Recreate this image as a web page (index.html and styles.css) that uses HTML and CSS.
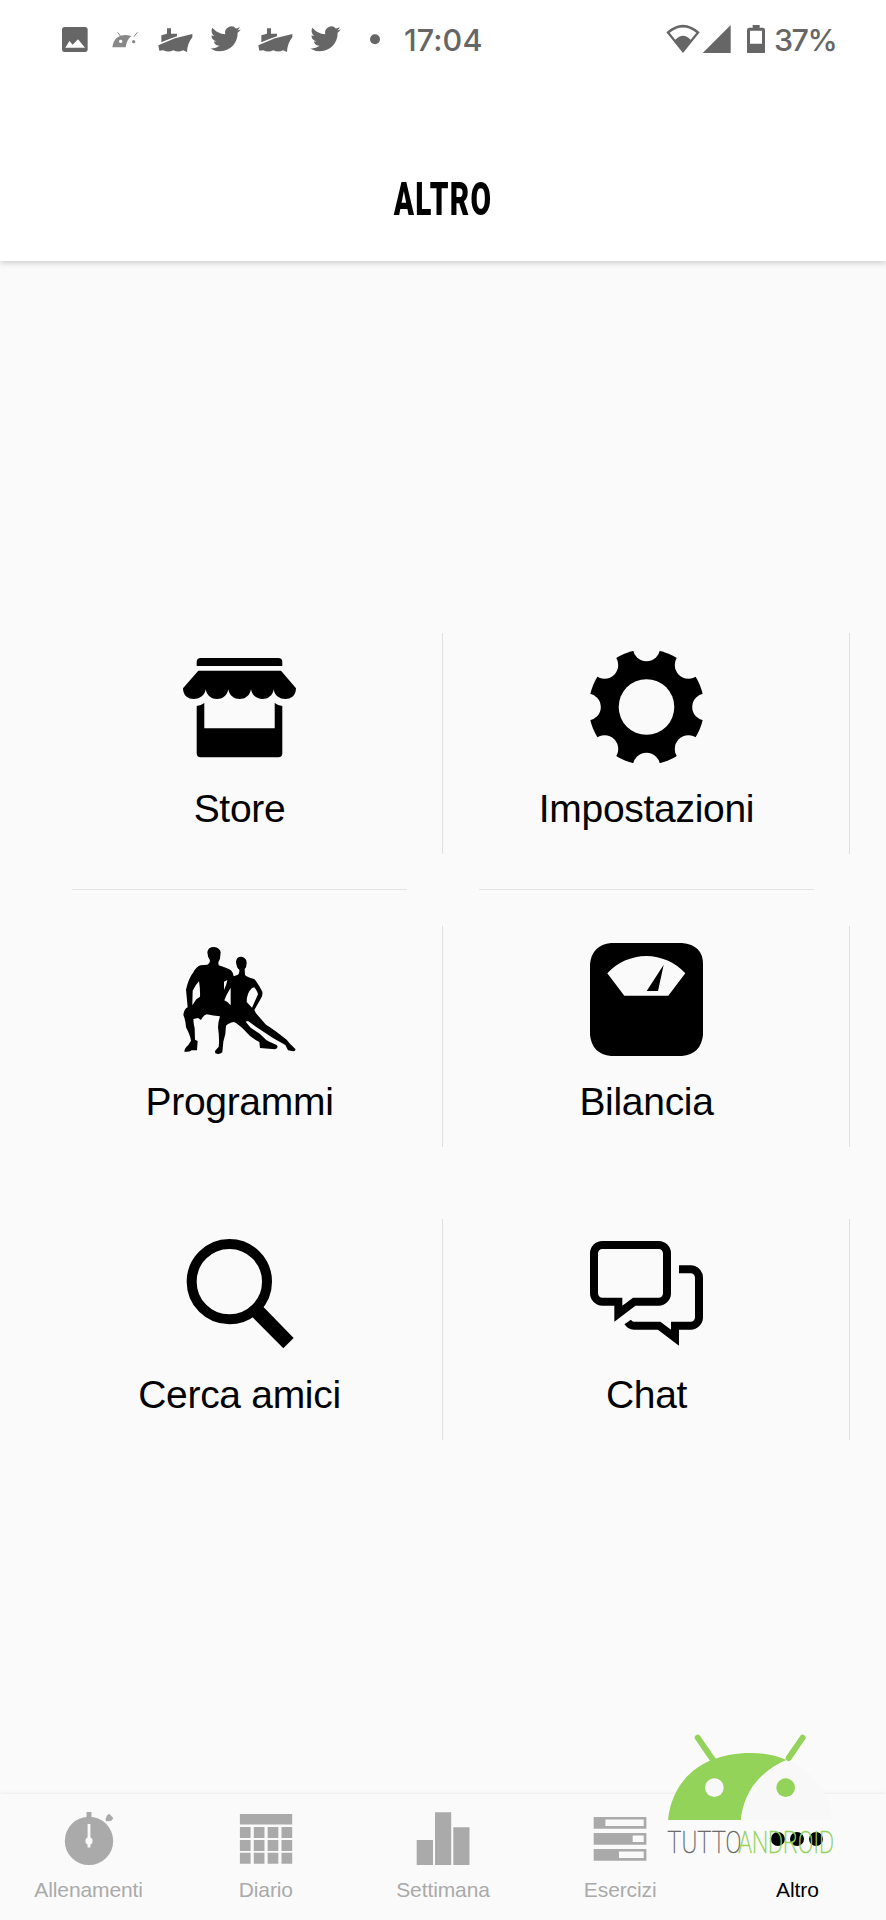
FILE: index.html
```html
<!DOCTYPE html>
<html lang="it">
<head>
    <meta charset="UTF-8">
    <meta name="viewport" content="width=device-width, initial-scale=1.0">
    <title>Altro</title>
    <link rel="stylesheet" href="styles.css">
</head>
<body>

<svg class="defs" width="0" height="0">
    <symbol id="ship" viewBox="0 0 150 90">
        <path d="M34 52V31l14-4V26H51V10h12v16h18v8L60 41zM25 61L75 40 127 27V37Q112 55 111 81L99 76Q85 83 70 76 55 83 40 76L28 77z"/>
    </symbol>
    <symbol id="bird" viewBox="0 0 150 90">
        <path transform="translate(31 -4) scale(3.8)" d="M23.953 4.57a10 10 0 01-2.825.775 4.958 4.958 0 002.163-2.723c-.951.555-2.005.959-3.127 1.184a4.92 4.92 0 00-8.384 4.482C7.69 8.095 4.067 6.13 1.64 3.162a4.822 4.822 0 00-.666 2.475c0 1.71.87 3.213 2.188 4.096a4.904 4.904 0 01-2.228-.616v.06a4.923 4.923 0 003.946 4.827 4.996 4.996 0 01-2.212.085 4.936 4.936 0 004.604 3.417 9.867 9.867 0 01-6.102 2.105c-.39 0-.779-.023-1.17-.067a13.995 13.995 0 007.557 2.209c9.053 0 13.998-7.496 13.998-13.985 0-.21 0-.42-.015-.63A9.935 9.935 0 0024 4.59z"/>
    </symbol>
</svg>

<div class="screen">
    <header class="header">
        <div class="status-bar">
            <div class="notifications">
                <svg viewBox="0 0 150 90"><path fill-rule="evenodd" d="M44 6H105Q113 6 113 14V73Q113 81 105 81H44Q36 81 36 73V14Q36 6 44 6zM46 68H105L84 43 68 59 58 48z"/></svg>
                <svg class="dim" viewBox="0 0 150 90">
                    <path fill-rule="evenodd" d="M37 67Q42 30 78 30L95 33Q80 42 77 67zM62 44a5 5 0 1 0 .1 0z"/>
                    <circle cx="101" cy="50" r="5"/>
                    <path d="M53 22L61 33M112 22L102 35" stroke="currentColor" stroke-width="3"/>
                </svg>
                <svg><use href="#ship"/></svg>
                <svg><use href="#bird"/></svg>
                <svg><use href="#ship"/></svg>
                <svg><use href="#bird"/></svg>
                <svg viewBox="0 0 150 90"><circle cx="75" cy="43" r="15"/></svg>
            </div>
            <span class="time">17:04</span>
            <svg class="signals" viewBox="978 39 300 90">
                <path fill-rule="evenodd" d="M979 67Q1029 22 1079 67L1029 129zM989 68L1006 89Q1029 66 1052 89L1069 68Q1029 37 989 68z"/>
                <path d="M1088 129L1172 45V129z"/>
                <path fill-rule="evenodd" d="M1238 45H1259V53H1268Q1275 53 1275 60V125Q1275 132 1268 132H1228Q1221 132 1221 125V60Q1221 53 1228 53H1238zM1230 62V101H1266V62z"/>
            </svg>
            <span class="battery">37%</span>
        </div>
        <h1>ALTRO</h1>
    </header>

    <main class="menu">
        <a class="item" href="#">
            <svg viewBox="0 0 113 113">
                <path d="M13.7 16V12Q13.7 8 17.7 8H95.3Q99.3 8 99.3 12V16z"/>
                <path d="M15.3 20.7H98L113 38.3C113 53 92 52 90.7 39.3 89 52.3 70 52.3 68 39.3 66 52.3 47.3 52.3 45.3 39.3 43.3 52.3 24.7 52.3 22.7 39.3 21 52 0 53 0 38.3z"/>
                <path d="M13.7 56Q18 55.5 21.3 53V78.3H91.7V53Q95 55.5 99.3 56V103.3Q99.3 107.3 95.3 107.3H17.7Q13.7 107.3 13.7 103.3z"/>
            </svg>
            <span>Store</span>
        </a>
        <a class="item" href="#">
            <svg viewBox="0 0 113 113">
                <mask id="teeth">
                    <rect width="113" height="114" fill="#fff"/>
                    <g fill="#000">
                        <circle cx="56.5" cy="57" r="27.8"/>
                        <circle cx="56.5" cy="-2.3" r="13.6"/>
                        <circle cx="98.4" cy="15.1" r="13.6"/>
                        <circle cx="115.8" cy="57" r="13.6"/>
                        <circle cx="98.4" cy="98.9" r="13.6"/>
                        <circle cx="56.5" cy="116.3" r="13.6"/>
                        <circle cx="14.6" cy="98.9" r="13.6"/>
                        <circle cx="-2.8" cy="57" r="13.6"/>
                        <circle cx="14.6" cy="15.1" r="13.6"/>
                    </g>
                </mask>
                <circle cx="56.5" cy="57" r="57.7" mask="url(#teeth)"/>
            </svg>
            <span>Impostazioni</span>
        </a>
        <a class="item" href="#">
            <svg viewBox="159 72 339 339">
                <path fill-rule="evenodd" d="M232 100Q234 84 252 84 270 86 272 100L270 119 265 130 266 139Q290 146 303 154 309 160 311 172L324 167Q329 162 328 152 319 145 318 128 320 112 334 113 350 115 350 132 350 145 344 150L345 168Q350 174 372 180 380 186 397 218 399 228 393 238L373 273 378 283 408 317Q430 330 470 362L480 374 496 390Q498 397 490 397L474 394 466 378 430 358 380 325 354 306 347 308 362 326 390 345 408 362 415 367 440 378Q447 387 435 391L390 387 388 369Q360 355 345 335 325 315 312 309 295 312 288 320 288 345 280 368L277 400Q268 408 256 403L255 396 266 383Q269 360 264 325 264 310 270 292 250 291 230 286 220 289 213 303L204 297 190 300Q191 318 194 328L195 362 203 366 201 394 185 394Q178 400 163 398 163 388 175 378L183 365Q181 350 168 325 166 300 160 288 162 270 173 265L168 212Q175 180 190 160 200 142 212 139L232 137Q242 132 239 122 233 115 232 100zM207 187Q196 198 188 215L187 259 199 241 210 233Q211 210 207 187zM282 188L292 183 289 196 282 213zM302 206L302 259Q295 249 283 244L290 227zM366 207Q350 222 350 249L366 266 384 226Q383 218 373 205z"/>
            </svg>
            <span>Programmi</span>
        </a>
        <a class="item" href="#">
            <svg viewBox="0 0 113 113">
                <path fill-rule="evenodd" d="M21 0H92Q113 2 113 21V92Q111 111 92 113H21Q2 111 0 92V21Q2 2 21 0zM17.3 30.3L34.3 52.7H78.3L95.3 30.3A52.6 52.6 0 0 0 17.3 30.3zM73.7 21.7L68 48H56.7z"/>
            </svg>
            <span>Bilancia</span>
        </a>
        <a class="item" href="#">
            <svg viewBox="159 80 339 339">
                <circle cx="298" cy="217" r="113" fill="none" stroke="currentColor" stroke-width="30"/>
                <path d="M391 283L491 386 460 417 359 315z"/>
            </svg>
            <span>Cerca amici</span>
        </a>
        <a class="item" href="#">
            <svg viewBox="210 80 339 339">
                <g fill="none" stroke="currentColor" stroke-width="24">
                    <path d="M295 277V313L343 277H416a25 25 0 0 0 25-25V132a25 25 0 0 0-25-25H247a25 25 0 0 0-25 25V252a25 25 0 0 0 25 25z"/>
                    <path d="M477 180H512a25 25 0 0 1 25 25V324a25 25 0 0 1-25 25H465V385L417 349H341Q331 349 323 338"/>
                </g>
            </svg>
            <span>Chat</span>
        </a>
    </main>

    <nav class="tabs">
        <a class="tab" href="#">
            <svg viewBox="0 0 54 54">
                <circle cx="27" cy="28.9" r="24.2"/>
                <path d="M24.5 0H29.5V6H24.5zM43.5 7L45 3.5 47 1.8 49.5 4 51.3 6.3 49 9 44 9.3z"/>
                <path d="M27 12V35.5" stroke="#fafafa" stroke-width="2.8"/>
                <circle cx="27" cy="28.9" r="3.6" fill="#fafafa"/>
            </svg>
            <span>Allenamenti</span>
        </a>
        <a class="tab" href="#">
            <svg viewBox="0 0 54 54">
                <path d="M.9 2H53.2V12.5H.9z"/>
                <path d="M.9 20.5H53.2M.9 33.5H53.2M.9 46.3H53.2" stroke="currentColor" stroke-width="11" stroke-dasharray="10.7 3.17"/>
            </svg>
            <span>Diario</span>
        </a>
        <a class="tab" href="#">
            <svg viewBox="0 0 54 54"><path d="M.7 28H17V53H.7zM19 .3H35.2V53H19zM37.3 15.3H53.5V53H37.3z"/></svg>
            <span>Settimana</span>
        </a>
        <a class="tab" href="#">
            <svg viewBox="0 0 54 54"><path fill-rule="evenodd" d="M.7 5H53.4V16.7H.7zM12.4 7.5V14H50.7V7.5zM.7 21H53.4V32.7H.7zM39.7 23.5V30H50.7V23.5zM.7 37H53.4V48.7H.7zM26 39.5V46H50.7V39.5z"/></svg>
            <span>Esercizi</span>
        </a>
        <a class="tab active" href="#">
            <svg viewBox="0 0 54 54">
                <circle cx="7.9" cy="27" r="7"/>
                <circle cx="27" cy="27" r="7"/>
                <circle cx="46" cy="27" r="7"/>
            </svg>
            <span>Altro</span>
        </a>
    </nav>

    <svg class="watermark" viewBox="0 0 738 420">
        <path class="green" d="M84 300C97 175 190 99 333 99Q390 99 440 120C360 155 311 215 303 300z"/>
        <path class="pale" d="M440 120C515 150 570 215 576 300H303C311 215 360 155 440 120z"/>
        <path class="antenna" d="M173 53L222 124"/>
        <path class="antenna" d="M488 53L446 114"/>
        <circle class="pale" cx="223" cy="203" r="28"/>
        <circle class="green" cx="437" cy="203" r="28"/>
        <text class="tutto" x="82" y="399" textLength="222" lengthAdjust="spacingAndGlyphs">TUTTO</text>
        <text class="android" x="295" y="399" textLength="287" lengthAdjust="spacingAndGlyphs">ANDROID</text>
    </svg>
</div>

</body>
</html>
```
FILE: styles.css
```css
* {
    margin: 0;
    padding: 0;
    box-sizing: border-box;
}

body {
    font-family: 'Liberation Sans', Arial, sans-serif;
    background-color: #fafafa;
    color: #000;
}

a {
    color: inherit;
    text-decoration: none;
}

svg {
    display: block;
    fill: currentColor;
}

.defs {
    position: absolute;
}

.screen {
    position: relative;
    display: flex;
    flex-direction: column;
    width: 886px;
    height: 1920px;
    overflow: hidden;
}

/* header */
.header {
    height: 261px;
    background-color: #fff;
    box-shadow: 0 2px 6px rgba(0, 0, 0, 0.18);
}

.status-bar {
    display: flex;
    height: 80px;
    padding: 23px 0 0 50px;
    color: #666;
    font-family: Inter, Roboto, sans-serif;
    font-size: 30.5px;
    font-weight: 500;
    line-height: 33px;
}

.notifications {
    display: flex;
    margin-top: 2px;
}

.notifications svg {
    width: 50px;
    height: 30px;
}

.notifications .dim {
    color: #888;
}

.time {
    width: 266px;
    padding-left: 4px;
    letter-spacing: 0.1px;
}

.signals {
    width: 100px;
    height: 30px;
}

.battery {
    padding-left: 8px;
    letter-spacing: -1.5px;
}

h1 {
    margin-top: 92px;
    font-family: Roboto, sans-serif;
    font-size: 46.5px;
    font-weight: 900;
    line-height: 55px;
    text-align: center;
    letter-spacing: 2px;
    transform: scaleX(0.64);
}

/* menu */
.menu {
    flex: 1;
    display: grid;
    grid-template-columns: 407px 407px;
    grid-auto-rows: 293px;
    align-content: center;
    padding: 18px 36px 0;
}

.item {
    position: relative;
    display: flex;
    flex-direction: column;
    align-items: center;
    padding-top: 53px;
    font-size: 39px;
}

.item svg {
    width: 113px;
    height: 113px;
}

.item span {
    margin-top: 23px;
    line-height: 45px;
    letter-spacing: -0.3px;
}

.item::after {
    content: '';
    position: absolute;
    top: 36px;
    right: 0;
    bottom: 36px;
    width: 1px;
    background-color: #e0e0e0;
}

.item:nth-child(-n+2)::before {
    content: '';
    position: absolute;
    left: 36px;
    right: 36px;
    bottom: 0;
    height: 1px;
    background-color: #e4e4e4;
}

/* bottom tabs */
.tabs {
    display: flex;
    height: 126px;
    padding-top: 18px;
    background-color: #fafafa;
    box-shadow: 0 -1px 3px rgba(0, 0, 0, 0.06);
}

.tab {
    flex: 1;
    display: flex;
    flex-direction: column;
    align-items: center;
    color: #aaa;
    font-size: 21px;
}

.tab.active {
    color: #000;
}

.tab svg {
    width: 54px;
    height: 54px;
}

.tab span {
    margin-top: 12px;
    line-height: 24px;
    letter-spacing: -0.1px;
}

/* watermark */
.watermark {
    position: absolute;
    left: 640px;
    top: 1720px;
    width: 246px;
    height: 140px;
    font-family: Roboto, sans-serif;
    font-size: 96px;
    font-weight: 100;
}

.green,
.android {
    fill: #93d35a;
}

.pale {
    fill: #f8f8f8;
}

.tutto {
    fill: #666;
    stroke: #666;
    stroke-width: 1.5;
}

.android {
    stroke: #93d35a;
    stroke-width: 2;
}

.antenna {
    stroke: #93d35a;
    stroke-width: 18;
    stroke-linecap: round;
}
```
